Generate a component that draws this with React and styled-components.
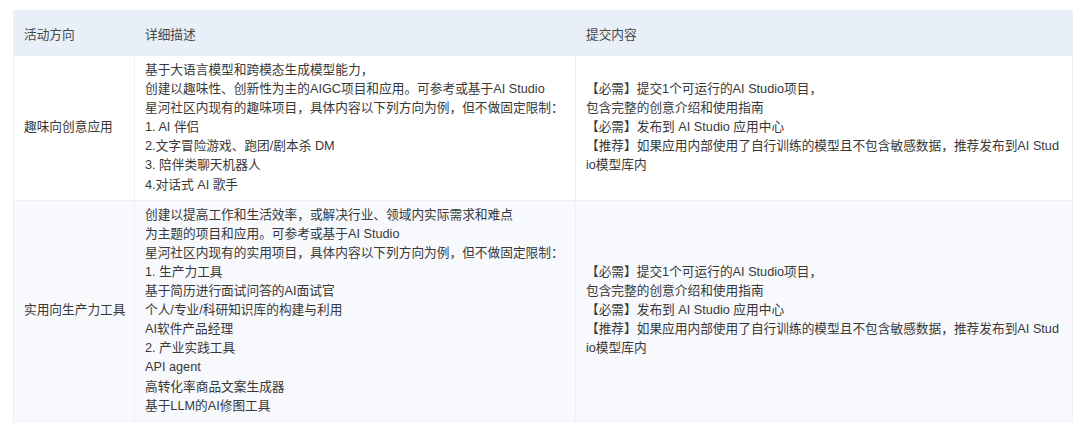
import React from 'react';
import styled, { createGlobalStyle } from 'styled-components';

const GlobalStyle = createGlobalStyle`
  html, body {
    margin: 0;
    padding: 0;
    background: #ffffff;
  }
  body {
    font-family: "Liberation Sans", "Noto Sans CJK SC", sans-serif;
  }
`;

const Page = styled.div`
  padding: 10px 8px 0 13px;
`;

const Table = styled.table`
  width: 1059px;
  border-collapse: collapse;
  table-layout: fixed;
  font-size: 12.7px;
  color: #383838;
`;

const HeadCell = styled.th`
  height: 44px;
  padding: 0 10px;
  text-align: left;
  font-weight: 400;
  color: #474747;
  background: #e8eff8;
  border: 1px solid #e8eff8;
  border-left-color: #e2e8f0;
  &:first-child {
    border-left-color: #e8eff8;
  }
`;

const Row = styled.tr`
  background: ${(p) => (p.$striped ? '#f7f9fd' : '#ffffff')};
`;

const Cell = styled.td`
  padding: 5px 10px;
  vertical-align: middle;
  line-height: 19.1px;
  border: 1px solid #eef0f4;
  white-space: nowrap;
`;

const Line = styled.div`
  white-space: pre;
`;

const columns = [
  { title: '活动方向', width: 121 },
  { title: '详细描述', width: 441 },
  { title: '提交内容', width: 497 },
];

const submitLines = [
  '【必需】提交1个可运行的AI Studio项目，',
  '包含完整的创意介绍和使用指南',
  '【必需】发布到 AI Studio 应用中心',
  '【推荐】如果应用内部使用了自行训练的模型且不包含敏感数据，推荐发布到AI Stud',
  'io模型库内',
];

const rows = [
  {
    direction: '趣味向创意应用',
    description: [
      '基于大语言模型和跨模态生成模型能力，',
      '创建以趣味性、创新性为主的AIGC项目和应用。可参考或基于AI Studio',
      '星河社区内现有的趣味项目，具体内容以下列方向为例，但不做固定限制：',
      '1. AI 伴侣',
      '2.文字冒险游戏、跑团/剧本杀 DM',
      '3. 陪伴类聊天机器人',
      '4.对话式 AI 歌手',
    ],
    submit: submitLines,
  },
  {
    direction: '实用向生产力工具',
    description: [
      '创建以提高工作和生活效率，或解决行业、领域内实际需求和难点',
      '为主题的项目和应用。可参考或基于AI Studio',
      '星河社区内现有的实用项目，具体内容以下列方向为例，但不做固定限制：',
      '1. 生产力工具',
      '基于简历进行面试问答的AI面试官',
      '个人/专业/科研知识库的构建与利用',
      'AI软件产品经理',
      '2. 产业实践工具',
      'API agent',
      '高转化率商品文案生成器',
      '基于LLM的AI修图工具',
    ],
    submit: submitLines,
  },
];

const Lines = ({ lines }) => lines.map((text, i) => <Line key={i}>{text}</Line>);

const App = () => (
  <>
    <GlobalStyle />
    <Page>
      <Table>
        <colgroup>
          {columns.map((c) => <col key={c.title} style={{ width: c.width }} />)}
        </colgroup>
        <thead>
          <tr>
            {columns.map((c) => <HeadCell key={c.title}>{c.title}</HeadCell>)}
          </tr>
        </thead>
        <tbody>
          {
            rows.map((row, index) => (
              <Row key={row.direction} $striped={index % 2 === 1}>
                <Cell>{row.direction}</Cell>
                <Cell><Lines lines={row.description} /></Cell>
                <Cell><Lines lines={row.submit} /></Cell>
              </Row>
            ))
          }
        </tbody>
      </Table>
    </Page>
  </>
);

export default App;
